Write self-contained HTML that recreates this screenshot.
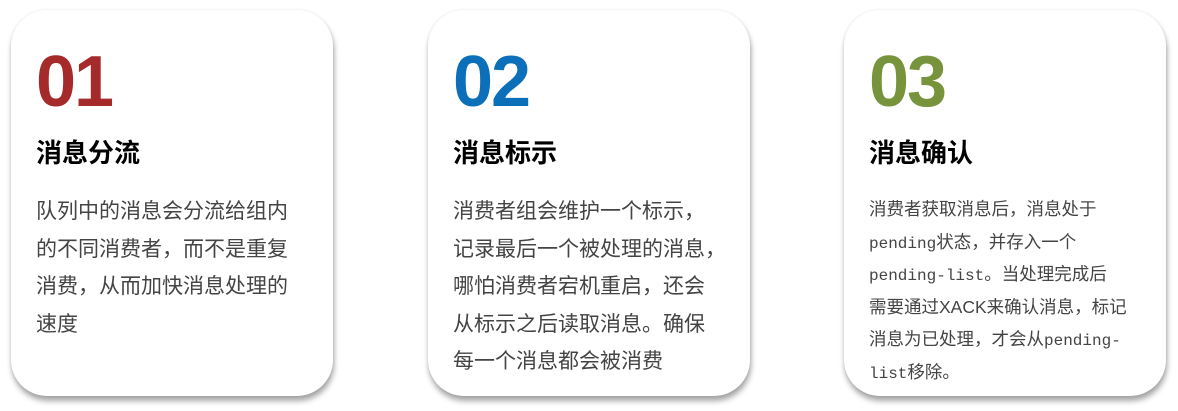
<!DOCTYPE html>
<html><head><meta charset="utf-8"><style>
body{margin:0;width:1178px;height:411px;background:#fff;position:relative;overflow:hidden;font-family:"Liberation Sans","Noto Sans CJK SC",sans-serif}
.c{position:absolute;top:10px;width:322px;height:386px;background:#fff;border-radius:36px;box-shadow:1px 5px 6px rgba(0,0,0,.35),0 0 3px rgba(0,0,0,.08)}
.n{position:absolute;left:25px;top:36px;font-size:72px;font-weight:bold;line-height:72px;letter-spacing:-2px}
.t{position:absolute;left:25px;top:128px;font-size:26px;font-weight:bold;color:#000;line-height:30px}
.b{position:absolute;left:25px;top:183px;width:300px;font-size:21px;line-height:37.5px;color:#444;white-space:nowrap}
.b3{font-size:17.5px;top:183px;width:300px}
.b3 div{height:32.5px;line-height:32.5px}
.m{font-family:"Liberation Mono","Noto Sans CJK SC",monospace;font-size:16px;line-height:1}
</style></head><body>
<div class="c" style="left:11px"><div class="n" style="color:#a52a2a">01</div><div class="t">消息分流</div><div class="b">队列中的消息会分流给组内<br>的不同消费者，而不是重复<br>消费，从而加快消息处理的<br>速度</div></div>
<div class="c" style="left:428px"><div class="n" style="color:#0b6fba">02</div><div class="t">消息标示</div><div class="b">消费者组会维护一个标示，<br>记录最后一个被处理的消息，<br>哪怕消费者宕机重启，还会<br>从标示之后读取消息。确保<br>每一个消息都会被消费</div></div>
<div class="c" style="left:844px"><div class="n" style="color:#77933c">03</div><div class="t">消息确认</div><div class="b b3"><div>消费者获取消息后，消息处于</div><div><span class="m">pending</span>状态，并存入一个</div><div><span class="m">pending-list</span>。当处理完成后</div><div>需要通过XACK来确认消息，标记</div><div>消息为已处理，才会从<span class="m">pending-</span></div><div><span class="m">list</span>移除。</div></div></div>
</body></html>
